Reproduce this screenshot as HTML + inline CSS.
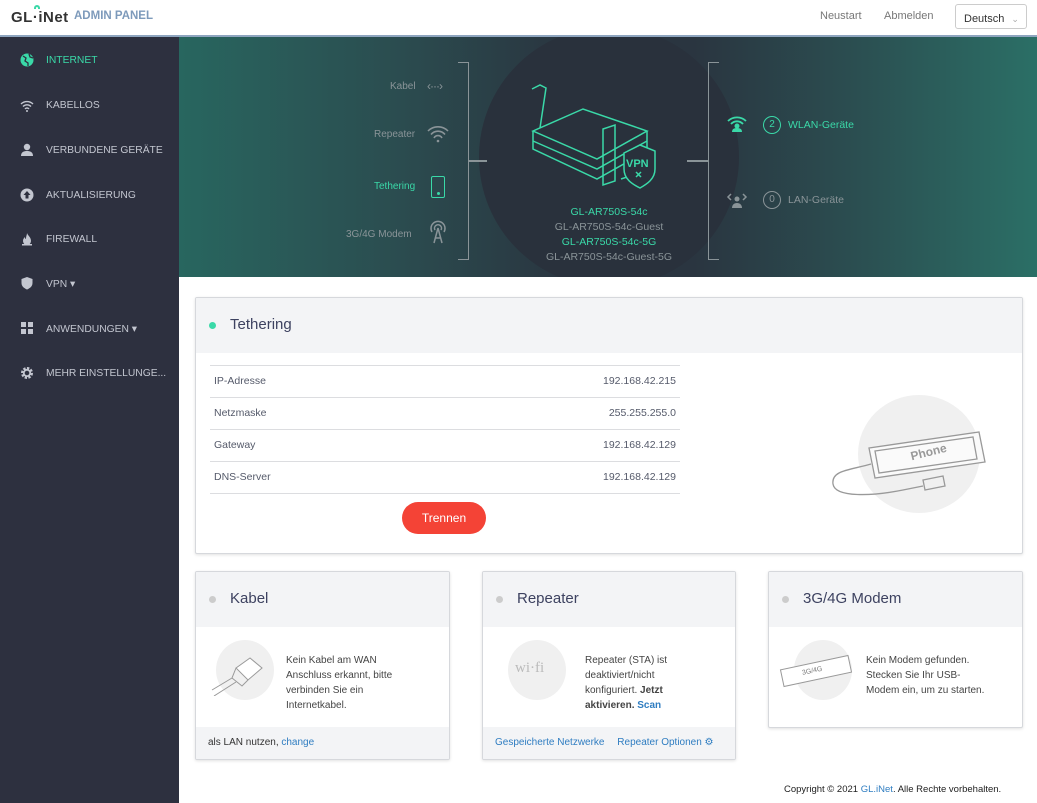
<!DOCTYPE html>
<html><head><meta charset="utf-8"><style>
*{box-sizing:border-box;margin:0;padding:0}
body{width:1037px;height:803px;overflow:hidden;font-family:"Liberation Sans",sans-serif;background:#fff;position:relative}
.hdr{position:absolute;left:0;top:0;width:1037px;height:37px;background:#fff;border-bottom:2px solid #8ea5bf}
.abs{position:absolute}
.side{position:absolute;left:0;top:37px;width:179px;height:766px;background:#2d303f}
.si{position:absolute;left:46px;font-size:10.3px;color:#c3c6d0;white-space:nowrap}
.ico{position:absolute;left:20px;width:14px;height:14px}
.ban{position:absolute;left:179px;top:37px;width:858px;height:240px;overflow:hidden;background:linear-gradient(90deg,#28665f 0%,#2b4d50 25%,#2a3540 45%,#2a3540 60%,#2b4d50 78%,#2b6f66 100%)}
.card{position:absolute;background:#fff;border:1px solid #d6d8dc;box-shadow:0 1px 3px rgba(0,0,0,.12);border-radius:2px;overflow:hidden}
.ch{height:55px;background:#f3f4f6;position:relative}
.ch .dot{position:absolute;left:13px;top:24px;width:7px;height:7px;border-radius:50%;background:#ccc}
.ch .t{position:absolute;left:34px;top:18px;font-size:15px;color:#3d4260}
.row{position:absolute;left:14px;width:470px;height:32px;border-top:1px solid #dcdde0;font-size:10.5px;color:#555a6a;line-height:31px;padding:0 4px}
.row span{float:right}
.txt{font-size:10px;color:#444;line-height:15px}
.foot{position:absolute;left:0;bottom:0;width:100%;height:32px;background:#f3f4f6;font-size:10px;color:#333;line-height:32px;padding-left:12px}
a{color:#2f7dc1;text-decoration:none}
.gc{position:absolute;border-radius:50%;background:#f0f0f0}
</style></head><body>
<div class="hdr">
 <div class="abs" style="left:11px;top:9px;font-size:15px;font-weight:bold;color:#333;letter-spacing:.5px">GL·iNet</div>
 <div class="abs" style="left:34px;top:5px;width:6px;height:4px;border:2px solid #3bd9a8;border-bottom:none;border-radius:6px 6px 0 0"></div>
 <div class="abs" style="left:74px;top:10px;font-size:11.5px;font-weight:bold;color:#7d9abb">ADMIN PANEL</div>
 <div class="abs" style="left:820px;top:10px;font-size:11px;color:#777">Neustart</div>
 <div class="abs" style="left:884px;top:10px;font-size:11px;color:#777">Abmelden</div>
 <div class="abs" style="left:955px;top:4px;width:72px;height:25px;border:1px solid #ccc;border-radius:3px;font-size:11px;color:#333;padding:8px 0 0 8px">Deutsch <span style="color:#aaa;font-size:9px;margin-left:4px">⌄</span></div>
</div>
<div class="side">
 <svg class="ico" style="top:16px" viewBox="0 0 14 14"><circle cx="7" cy="7" r="6.5" fill="#3ad9a8"/><path d="M3 3l3 2-1 3 3 2 0 3M9 1l1 3 3 1" stroke="#2d303f" stroke-width="1.3" fill="none"/></svg>
 <div class="si" style="top:18px;color:#3ad9a8">INTERNET</div>
 <svg class="ico" style="top:62px" viewBox="0 0 14 14"><path d="M1 5a8.5 8.5 0 0 1 12 0M3 7.5a5.5 5.5 0 0 1 8 0M5 10a2.5 2.5 0 0 1 4 0" stroke="#c3c6d0" stroke-width="1.4" fill="none"/><circle cx="7" cy="12" r="1" fill="#c3c6d0"/></svg>
 <div class="si" style="top:63px">KABELLOS</div>
 <svg class="ico" style="top:106px" viewBox="0 0 14 14"><circle cx="7" cy="4" r="3.2" fill="#c3c6d0"/><path d="M1 13c0-4 3-5 6-5s6 1 6 5z" fill="#c3c6d0"/></svg>
 <div class="si" style="top:108px">VERBUNDENE GERÄTE</div>
 <svg class="ico" style="top:151px" viewBox="0 0 14 14"><circle cx="7" cy="7" r="6.5" fill="#c3c6d0"/><path d="M7 3l-3.5 4h2v3.5h3V7h2z" fill="#2d303f"/></svg>
 <div class="si" style="top:153px">AKTUALISIERUNG</div>
 <svg class="ico" style="top:195px" viewBox="0 0 14 14"><path d="M7 1c1 3 4 4 4 8a4 4 0 0 1-8 0c0-2 1-3 2-4 0 2 1 2 1 2 0-3 1-4 1-6z" fill="#c3c6d0"/><rect x="2" y="12" width="10" height="1.5" fill="#c3c6d0"/></svg>
 <div class="si" style="top:197px">FIREWALL</div>
 <svg class="ico" style="top:239px" viewBox="0 0 14 14"><path d="M7 1l5.5 2v4c0 3.5-3 5.5-5.5 6.5C4.5 12.5 1.5 10.5 1.5 7V3z" fill="#c3c6d0"/></svg>
 <div class="si" style="top:241px">VPN ▾</div>
 <svg class="ico" style="top:284px" viewBox="0 0 14 14" fill="#c3c6d0"><rect x="1" y="1" width="5" height="5"/><rect x="8" y="1" width="5" height="5"/><rect x="1" y="8" width="5" height="5"/><rect x="8" y="8" width="5" height="5"/></svg>
 <div class="si" style="top:286px">ANWENDUNGEN ▾</div>
 <svg class="ico" style="top:329px" viewBox="0 0 14 14"><circle cx="7" cy="7" r="4.5" fill="none" stroke="#c3c6d0" stroke-width="3" stroke-dasharray="2.2 1.3"/><circle cx="7" cy="7" r="3.2" fill="none" stroke="#c3c6d0" stroke-width="1.8"/></svg>
 <div class="si" style="top:331px">MEHR EINSTELLUNGE...</div>
</div>
<div class="ban">
 <div class="abs" style="left:300px;top:-10px;width:260px;height:260px;border-radius:50%;background:#29313c"></div>
 <div class="abs" style="left:211px;top:44px;font-size:10px;color:#8a9498">Kabel</div>
 <div class="abs" style="left:248px;top:42px;font-size:12px;color:#8a9498;letter-spacing:-1px">‹···›</div>
 <div class="abs" style="left:195px;top:92px;font-size:10px;color:#8a9498">Repeater</div>
 <svg class="abs" style="left:248px;top:88px" width="22" height="18" viewBox="0 0 22 18"><path d="M1 6a14 14 0 0 1 20 0M4 9.5a9 9 0 0 1 14 0M7 13a4.5 4.5 0 0 1 8 0" stroke="#8a9498" stroke-width="1.6" fill="none"/><circle cx="11" cy="16" r="1.3" fill="#8a9498"/></svg>
 <div class="abs" style="left:195px;top:144px;font-size:10px;color:#3ad9a8">Tethering</div>
 <div class="abs" style="left:252px;top:139px;width:14px;height:22px;border:1.5px solid #3ad9a8;border-radius:2px"></div>
 <div class="abs" style="left:258px;top:155px;width:3px;height:3px;background:#3ad9a8;border-radius:50%"></div>
 <div class="abs" style="left:167px;top:192px;font-size:10px;color:#8a9498">3G/4G Modem</div>
 <svg class="abs" style="left:249px;top:183px" width="20" height="24" viewBox="0 0 20 24"><path d="M4 12a7 7 0 1 1 12 0M7 10a3.5 3.5 0 1 1 6 0" stroke="#8a9498" stroke-width="1.5" fill="none"/><path d="M10 8l-4 15M10 8l4 15M7 18h6" stroke="#8a9498" stroke-width="1.5" fill="none"/></svg>
 <div class="abs" style="left:279px;top:25px;width:11px;height:198px;border:1.5px solid #8a9498;border-left:none"></div>
 <div class="abs" style="left:290px;top:123px;width:18px;height:1.5px;background:#8a9498"></div>
 <div class="abs" style="left:529px;top:25px;width:11px;height:198px;border:1.5px solid #8a9498;border-right:none"></div>
 <div class="abs" style="left:508px;top:123px;width:21px;height:1.5px;background:#8a9498"></div>
 <svg class="abs" style="left:350px;top:46px" width="140" height="110" viewBox="0 0 140 110" fill="none" stroke="#3ad9a8" stroke-width="1.5"><path d="M3 6l8-4 6 3-6 40"/><path d="M4 48l50-22 64 22-50 28z"/><path d="M4 48v18l64 30 50-28V48"/><path d="M4 58l64 28 50-28"/><path d="M74 46l12-4v56l-12 4z"/><path d="M92 96l24-8V76"/><path d="M95 70l16-8 15 6v18c0 10-8 15-15 19-8-4-16-9-16-19z" fill="#29313c"/><text x="97" y="84" fill="#3ad9a8" stroke="none" font-size="11" font-weight="bold" font-family="Liberation Sans">VPN</text><path d="M107 89l5 5M112 89l-5 5"/></svg>
 <div class="abs" style="left:300px;top:168px;width:260px;text-align:center;font-size:10.5px;line-height:15px;color:#8a9498"><span style="color:#3ad9a8">GL-AR750S-54c</span><br>GL-AR750S-54c-Guest<br><span style="color:#3ad9a8">GL-AR750S-54c-5G</span><br>GL-AR750S-54c-Guest-5G</div>
 <svg class="abs" style="left:547px;top:78px" width="22" height="18" viewBox="0 0 22 18"><path d="M2 6a13 13 0 0 1 18 0M5 9a8 8 0 0 1 12 0" stroke="#3ad9a8" stroke-width="1.8" fill="none"/><circle cx="11" cy="11" r="2.5" fill="#3ad9a8"/><path d="M6 17c0-3 2-4 5-4s5 1 5 4z" fill="#3ad9a8"/></svg>
 <div class="abs" style="left:584px;top:79px;width:18px;height:18px;border:1.3px solid #3ad9a8;border-radius:50%;color:#3ad9a8;font-size:10px;text-align:center;line-height:16px">2</div>
 <div class="abs" style="left:609px;top:82px;font-size:10.5px;color:#3ad9a8">WLAN-Geräte</div>
 <svg class="abs" style="left:547px;top:152px" width="22" height="20" viewBox="0 0 22 20"><path d="M5 5l-3 3 3 3M17 5l3 3-3 3" stroke="#8a9498" stroke-width="1.5" fill="none"/><circle cx="11" cy="10" r="2.5" fill="#8a9498"/><path d="M6 19c0-3 2-5 5-5s5 2 5 5z" fill="#8a9498"/></svg>
 <div class="abs" style="left:584px;top:154px;width:18px;height:18px;border:1.3px solid #8a9498;border-radius:50%;color:#8a9498;font-size:10px;text-align:center;line-height:16px">0</div>
 <div class="abs" style="left:609px;top:157px;font-size:10.5px;color:#8a9498">LAN-Geräte</div>
</div>

<div class="card" style="left:195px;top:297px;width:828px;height:257px">
 <div class="ch"><div class="dot" style="background:#3ad9a8"></div><div class="t">Tethering</div></div>
 <div class="row" style="top:67px">IP-Adresse<span>192.168.42.215</span></div>
 <div class="row" style="top:99px">Netzmaske<span>255.255.255.0</span></div>
 <div class="row" style="top:131px">Gateway<span>192.168.42.129</span></div>
 <div class="row" style="top:163px;height:33px;border-bottom:1px solid #dcdde0">DNS-Server<span>192.168.42.129</span></div>
 <div class="abs" style="left:206px;top:204px;width:84px;height:32px;border-radius:16px;background:#f44336;color:#fff;font-size:12px;text-align:center;line-height:32px">Trennen</div>
 <div class="gc" style="left:662px;top:97px;width:122px;height:118px"></div>
 <svg class="abs" style="left:635px;top:130px" width="160" height="80" viewBox="0 0 160 80" fill="none" stroke="#999" stroke-width="1.3"><path d="M38 20l110-16 6 30-110 16z" fill="#fafafa"/><path d="M44 23l98-14 4 22-98 14z"/><text x="80" y="30" transform="rotate(-14 90 28)" fill="#999" stroke="none" font-size="12" font-weight="bold" font-family="Liberation Sans">Phone</text><path d="M40 36c-20 6-40 6-38 20s40 12 70 6l20-4"/><path d="M92 52l20-4 2 10-20 4z"/></svg>
</div>

<div class="card" style="left:195px;top:571px;width:255px;height:189px">
 <div class="ch"><div class="dot"></div><div class="t">Kabel</div></div>
 <div class="gc" style="left:20px;top:68px;width:58px;height:60px"></div>
 <svg class="abs" style="left:14px;top:78px" width="60" height="46" viewBox="0 0 60 46" fill="none" stroke="#999" stroke-width="1"><path d="M26 18l14-10 12 10-14 12z" fill="#fff"/><path d="M26 18l-4 10 10 8 6-6"/><path d="M22 28L2 40M26 32L4 46"/></svg>
 <div class="txt abs" style="left:90px;top:81px;width:125px">Kein Kabel am WAN Anschluss erkannt, bitte verbinden Sie ein Internetkabel.</div>
 <div class="foot">als LAN nutzen, <a>change</a></div>
</div>
<div class="card" style="left:482px;top:571px;width:254px;height:189px">
 <div class="ch"><div class="dot"></div><div class="t">Repeater</div></div>
 <div class="gc" style="left:25px;top:68px;width:58px;height:60px"></div>
 <div class="abs" style="left:32px;top:88px;font-size:15px;color:#bbb;font-family:'Liberation Serif',serif">wi·fi</div>
 <div class="txt abs" style="left:102px;top:81px;width:95px">Repeater (STA) ist deaktiviert/nicht konfiguriert. <b>Jetzt aktivieren.</b> <a><b>Scan</b></a></div>
 <div class="foot" style="color:#2f7dc1">Gespeicherte Netzwerke <span style="margin-left:10px">Repeater Optionen ⚙</span></div>
</div>
<div class="card" style="left:768px;top:571px;width:255px;height:157px">
 <div class="ch"><div class="dot"></div><div class="t">3G/4G Modem</div></div>
 <div class="gc" style="left:25px;top:68px;width:58px;height:60px"></div>
 <div class="abs" style="left:12px;top:90px;width:70px;height:18px;border:1px solid #999;background:#fff;transform:rotate(-12deg);font-size:7px;color:#777;padding:4px 0 0 20px">3G/4G</div>
 <div class="txt abs" style="left:97px;top:81px;width:120px">Kein Modem gefunden. Stecken Sie Ihr USB-Modem ein, um zu starten.</div>
</div>
<div class="abs" style="left:784px;top:784px;font-size:9.5px;color:#222">Copyright © 2021 <a>GL.iNet</a>. Alle Rechte vorbehalten.</div>
</body></html>
